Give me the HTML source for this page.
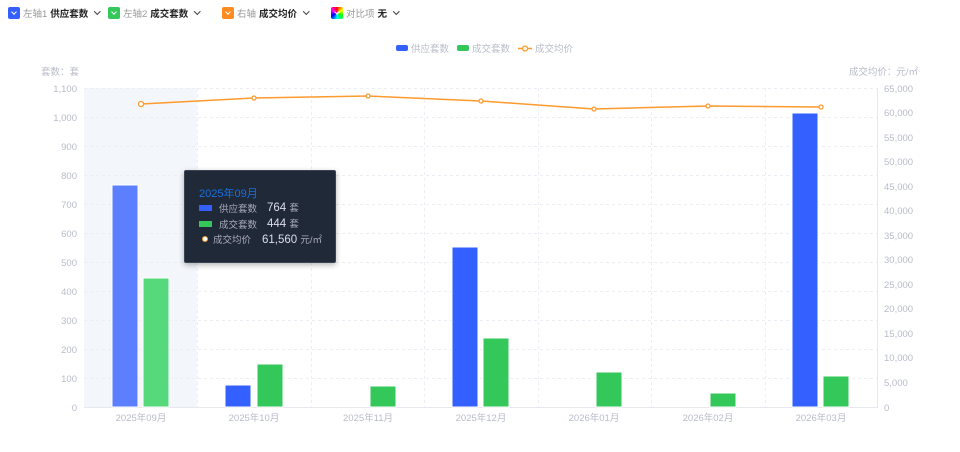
<!DOCTYPE html>
<html><head><meta charset="utf-8"><style>
body{margin:0;width:960px;height:452px;background:#fff;overflow:hidden;font-family:"Liberation Sans","Noto Sans CJK SC",sans-serif;position:relative}
.it{position:absolute;top:6px;font-size:9.5px;color:#999;display:flex;align-items:center;white-space:nowrap}
.sq{display:inline-block;width:12px;height:12px;border-radius:2px;margin-right:3px;position:relative}
.sq:after{content:"";position:absolute;left:4px;top:3px;width:3px;height:3px;border-right:1.2px solid #fff;border-bottom:1.2px solid #fff;transform:rotate(45deg)}
.it b{color:#222;font-weight:bold;margin-left:3px}
.ch{display:inline-block;width:3.5px;height:3.5px;border-right:1.2px solid #444;border-bottom:1.2px solid #444;transform:rotate(45deg);margin:0 0 3px 7px}
.tip{position:absolute;left:184px;top:170px;width:150px;height:91px;background:#1f2937;border:1px solid #3a4452;box-shadow:0 2px 6px rgba(0,0,0,.3);border-radius:2px;color:#aab;font-size:9.5px}
</style></head><body>
<span class="it" style="left:8px"><span class="sq" style="background:#3360ff"></span>左轴1<b>供应套数</b><span class="ch"></span></span>
<span class="it" style="left:108px"><span class="sq" style="background:#34c759"></span>左轴2<b>成交套数</b><span class="ch"></span></span>
<span class="it" style="left:222px"><span class="sq" style="background:#ff8c21"></span>右轴<b>成交均价</b><span class="ch"></span></span>
<span class="it" style="left:331px"><span class="sq" style="background:conic-gradient(red,yellow,lime,cyan,blue,magenta,red)"></span>对比项<b>无</b><span class="ch"></span></span>
<svg width="960" height="452" style="position:absolute;left:0;top:0" font-family="Liberation Sans, Noto Sans CJK SC, sans-serif">
<rect x="84" y="88" width="113" height="319" fill="#f3f6fb"/>
<g stroke="#eceef3" stroke-dasharray="3,3" stroke-width="1">
<line x1="84" x2="878" y1="88.5" y2="88.5"/><line x1="84" x2="878" y1="117.5" y2="117.5"/><line x1="84" x2="878" y1="146.5" y2="146.5"/><line x1="84" x2="878" y1="175.5" y2="175.5"/><line x1="84" x2="878" y1="204.5" y2="204.5"/><line x1="84" x2="878" y1="233.5" y2="233.5"/><line x1="84" x2="878" y1="262.5" y2="262.5"/><line x1="84" x2="878" y1="291.5" y2="291.5"/><line x1="84" x2="878" y1="320.5" y2="320.5"/><line x1="84" x2="878" y1="349.5" y2="349.5"/><line x1="84" x2="878" y1="378.5" y2="378.5"/>
<line x1="197.5" x2="197.5" y1="88" y2="407"/><line x1="311.5" x2="311.5" y1="88" y2="407"/><line x1="424.5" x2="424.5" y1="88" y2="407"/><line x1="538.5" x2="538.5" y1="88" y2="407"/><line x1="651.5" x2="651.5" y1="88" y2="407"/><line x1="765.5" x2="765.5" y1="88" y2="407"/>
</g>
<line x1="84" x2="878" y1="407.5" y2="407.5" stroke="#e6e8ee"/>
<line x1="877.5" x2="877.5" y1="88" y2="407" stroke="#e6e8ee"/>
<g fill="#5b7fff" stroke="#fff" stroke-width="1"><rect x="112" y="185" width="26" height="222"/></g>
<g fill="#56d97b" stroke="#fff"><rect x="143" y="278" width="26" height="129"/></g>
<g fill="#3360ff" stroke="#fff">
<rect x="225" y="385" width="26" height="22"/><rect x="452" y="247" width="26" height="160"/><rect x="792" y="113" width="26" height="294"/>
</g>
<g fill="#34c759" stroke="#fff">
<rect x="257" y="364" width="26" height="43"/><rect x="370" y="386" width="26" height="21"/><rect x="483" y="338" width="26" height="69"/><rect x="596" y="372" width="26" height="35"/><rect x="710" y="393" width="26" height="14"/><rect x="823" y="376" width="26" height="31"/>
</g>
<polyline points="141,104 254,98 368,96 481,101 594,109 708,106 821,107" fill="none" stroke="#ff9a2e" stroke-width="1.5"/>
<g fill="#fff" stroke="#ff9a2e" stroke-width="1.3">
<circle cx="141" cy="104" r="2.5"/><circle cx="254" cy="98" r="2"/><circle cx="368" cy="96" r="2"/><circle cx="481" cy="101" r="2"/><circle cx="594" cy="109" r="2"/><circle cx="708" cy="106" r="2"/><circle cx="821" cy="107" r="2"/>
</g>
<g fill="#b8bcc8" font-size="9.5" text-anchor="end">
<text x="77" y="92">1,100</text><text x="77" y="121">1,000</text><text x="77" y="150">900</text><text x="77" y="179">800</text><text x="77" y="208">700</text><text x="77" y="237">600</text><text x="77" y="266">500</text><text x="77" y="295">400</text><text x="77" y="324">300</text><text x="77" y="353">200</text><text x="77" y="382">100</text><text x="77" y="411">0</text>
<text x="79" y="75">套数：套</text>
<text x="918" y="75">成交均价：元/㎡</text>
</g>
<g fill="#b8bcc8" font-size="9.5" text-anchor="start">
<text x="884" y="92">65,000</text><text x="884" y="116">60,000</text><text x="884" y="141">55,000</text><text x="884" y="165">50,000</text><text x="884" y="190">45,000</text><text x="884" y="214">40,000</text><text x="884" y="239">35,000</text><text x="884" y="263">30,000</text><text x="884" y="288">25,000</text><text x="884" y="312">20,000</text><text x="884" y="337">15,000</text><text x="884" y="361">10,000</text><text x="884" y="386">5,000</text><text x="884" y="411">0</text>
</g>
<g fill="#b8bcc8" font-size="9.5" text-anchor="middle">
<text x="141" y="421">2025年09月</text><text x="254" y="421">2025年10月</text><text x="368" y="421">2025年11月</text><text x="481" y="421">2025年12月</text><text x="594" y="421">2026年01月</text><text x="708" y="421">2026年02月</text><text x="821" y="421">2026年03月</text>
</g>
<rect x="396" y="45" width="12" height="6" rx="2" fill="#3360ff"/><text x="411" y="52" font-size="9.5" fill="#b8bcc8">供应套数</text>
<rect x="457" y="45" width="12" height="6" rx="2" fill="#34c759"/><text x="472" y="52" font-size="9.5" fill="#b8bcc8">成交套数</text>
<line x1="518" x2="532" y1="48.5" y2="48.5" stroke="#ff9a2e" stroke-width="1.5"/><circle cx="525" cy="48.5" r="2.5" fill="#fff" stroke="#ff9a2e" stroke-width="1.3"/><text x="535" y="52" font-size="9.5" fill="#b8bcc8">成交均价</text>
</svg>
<div class="tip">
<div style="position:absolute;left:14px;top:14px;color:#1a6fe0;font-size:11px">2025年09月</div>
<div style="position:absolute;left:14px;top:34px;width:13px;height:6px;background:#3360ff"></div>
<div style="position:absolute;left:34px;top:30px">供应套数</div><div style="position:absolute;left:82px;top:29px;color:#dde;font-size:11.5px">764 <span style="font-size:9.5px;color:#aab">套</span></div>
<div style="position:absolute;left:14px;top:50px;width:13px;height:6px;background:#34c759"></div>
<div style="position:absolute;left:34px;top:46px">成交套数</div><div style="position:absolute;left:82px;top:45px;color:#dde;font-size:11.5px">444 <span style="font-size:9.5px;color:#aab">套</span></div>
<div style="position:absolute;left:17px;top:65px;width:4px;height:4px;border-radius:50%;background:#fff;border:1.5px solid #ff9a2e"></div>
<div style="position:absolute;left:28px;top:61px">成交均价</div><div style="position:absolute;left:77px;top:61px;color:#dde;font-size:11.5px">61,560 <span style="font-size:9.5px;color:#aab">元/㎡</span></div>
</div>
</body></html>
